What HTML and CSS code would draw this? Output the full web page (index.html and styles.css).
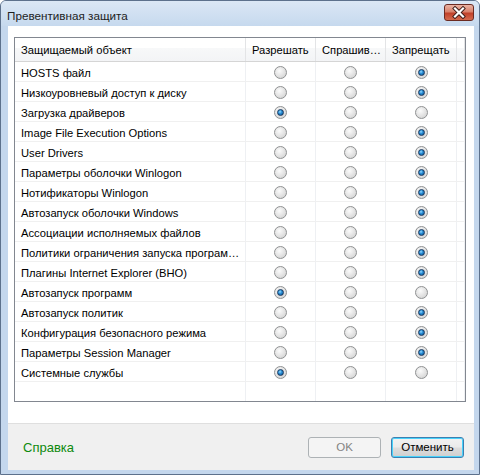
FILE: index.html
```html
<!DOCTYPE html>
<html>
<head>
<meta charset="utf-8">
<link rel="stylesheet" href="styles.css">
</head>
<body>
<div class="window">
  <div class="titlebar">
    <span class="title">Превентивная защита</span>
    <div class="close">
      <svg width="30" height="17" viewBox="0 0 30 17">
        <path d="M11 4.5 L19 12.5 M19 4.5 L11 12.5" stroke="#3a1a16" stroke-width="4" stroke-linecap="square" fill="none"/>
        <path d="M11 4.5 L19 12.5 M19 4.5 L11 12.5" stroke="#ffffff" stroke-width="2.2" stroke-linecap="square" fill="none"/>
      </svg>
    </div>
  </div>
  <div class="frame">
    <div class="client">
      <div class="content">
        <div class="list">
          <div class="row head">
            <div class="cell name">Защищаемый объект</div>
            <div class="cell opt">Разрешать</div>
            <div class="cell opt">Спрашив…</div>
            <div class="cell opt">Запрещать</div>
            <div class="cell fill"></div>
          </div>
          <div class="row"><div class="cell name">HOSTS файл</div><div class="cell c"><span class="radio"></span></div><div class="cell c"><span class="radio"></span></div><div class="cell c"><span class="radio on"></span></div><div class="cell fill"></div></div>
          <div class="row"><div class="cell name">Низкоуровневый доступ к диску</div><div class="cell c"><span class="radio"></span></div><div class="cell c"><span class="radio"></span></div><div class="cell c"><span class="radio on"></span></div><div class="cell fill"></div></div>
          <div class="row"><div class="cell name">Загрузка драйверов</div><div class="cell c"><span class="radio on"></span></div><div class="cell c"><span class="radio"></span></div><div class="cell c"><span class="radio"></span></div><div class="cell fill"></div></div>
          <div class="row"><div class="cell name">Image File Execution Options</div><div class="cell c"><span class="radio"></span></div><div class="cell c"><span class="radio"></span></div><div class="cell c"><span class="radio on"></span></div><div class="cell fill"></div></div>
          <div class="row"><div class="cell name">User Drivers</div><div class="cell c"><span class="radio"></span></div><div class="cell c"><span class="radio"></span></div><div class="cell c"><span class="radio on"></span></div><div class="cell fill"></div></div>
          <div class="row"><div class="cell name">Параметры оболочки Winlogon</div><div class="cell c"><span class="radio"></span></div><div class="cell c"><span class="radio"></span></div><div class="cell c"><span class="radio on"></span></div><div class="cell fill"></div></div>
          <div class="row"><div class="cell name">Нотификаторы Winlogon</div><div class="cell c"><span class="radio"></span></div><div class="cell c"><span class="radio"></span></div><div class="cell c"><span class="radio on"></span></div><div class="cell fill"></div></div>
          <div class="row"><div class="cell name">Автозапуск оболочки Windows</div><div class="cell c"><span class="radio"></span></div><div class="cell c"><span class="radio"></span></div><div class="cell c"><span class="radio on"></span></div><div class="cell fill"></div></div>
          <div class="row"><div class="cell name">Ассоциации исполняемых файлов</div><div class="cell c"><span class="radio"></span></div><div class="cell c"><span class="radio"></span></div><div class="cell c"><span class="radio on"></span></div><div class="cell fill"></div></div>
          <div class="row"><div class="cell name">Политики ограничения запуска програм…</div><div class="cell c"><span class="radio"></span></div><div class="cell c"><span class="radio"></span></div><div class="cell c"><span class="radio on"></span></div><div class="cell fill"></div></div>
          <div class="row"><div class="cell name">Плагины Internet Explorer (BHO)</div><div class="cell c"><span class="radio"></span></div><div class="cell c"><span class="radio"></span></div><div class="cell c"><span class="radio on"></span></div><div class="cell fill"></div></div>
          <div class="row"><div class="cell name">Автозапуск программ</div><div class="cell c"><span class="radio on"></span></div><div class="cell c"><span class="radio"></span></div><div class="cell c"><span class="radio"></span></div><div class="cell fill"></div></div>
          <div class="row"><div class="cell name">Автозапуск политик</div><div class="cell c"><span class="radio"></span></div><div class="cell c"><span class="radio"></span></div><div class="cell c"><span class="radio on"></span></div><div class="cell fill"></div></div>
          <div class="row"><div class="cell name">Конфигурация безопасного режима</div><div class="cell c"><span class="radio"></span></div><div class="cell c"><span class="radio"></span></div><div class="cell c"><span class="radio on"></span></div><div class="cell fill"></div></div>
          <div class="row"><div class="cell name">Параметры Session Manager</div><div class="cell c"><span class="radio"></span></div><div class="cell c"><span class="radio"></span></div><div class="cell c"><span class="radio on"></span></div><div class="cell fill"></div></div>
          <div class="row"><div class="cell name">Системные службы</div><div class="cell c"><span class="radio on"></span></div><div class="cell c"><span class="radio"></span></div><div class="cell c"><span class="radio"></span></div><div class="cell fill"></div></div>
          <div class="row empty"><div class="cell name"></div><div class="cell c"></div><div class="cell c"></div><div class="cell c"></div><div class="cell fill"></div></div>
        </div>
      </div>
      <div class="footer">
        <span class="help">Справка</span>
        <span class="spacer"></span>
        <div class="btn disabled">OK</div>
        <div class="btn default">Отменить</div>
      </div>
    </div>
  </div>
</div>
</body>
</html>
```
FILE: styles.css
```css
html, body {
  margin: 0;
  padding: 0;
}
body {
  width: 480px;
  height: 475px;
  overflow: hidden;
  background: #ffffff;
  font-family: "Liberation Sans", Arial, sans-serif;
  font-size: 11.2px;
  color: #000;
}
.window {
  width: 480px;
  height: 475px;
  box-sizing: border-box;
  border: 1px solid #5d718c;
  border-radius: 6px 6px 0 0;
  background: #c4d7ed;
  display: flex;
  flex-direction: column;
  overflow: hidden;
}
.titlebar {
  height: 25px;
  flex: none;
  display: flex;
  align-items: flex-start;
  background: linear-gradient(#dbe7f5, #c6d9ee);
}
.title {
  padding: 7px 0 0 6px;
  line-height: 15px;
  font-size: 11.7px;
  color: #1e1e1e;
}
.close {
  margin-left: auto;
  margin-top: 3px;
  margin-right: 5px;
  width: 30px;
  height: 17px;
  box-sizing: border-box;
  border: 1px solid #6b2b22;
  border-radius: 3px;
  background: linear-gradient(#eab3a4 0%, #d9826c 45%, #c1412a 55%, #d46b4f 100%);
  display: flex;
  align-items: center;
  justify-content: center;
}
.close svg {
  display: block;
  margin: -1px;
}
.frame {
  flex: 1;
  display: flex;
  padding: 0 5px 4px 7px;
  background: #c4d7ed;
}
.client {
  flex: 1;
  display: flex;
  flex-direction: column;
  background: #ffffff;
}
.content {
  height: 397px;
  box-sizing: border-box;
  padding: 11px 8px 0 6px;
}
.list {
  height: 365px;
  box-sizing: border-box;
  border: 1px solid #828790;
  display: flex;
  flex-direction: column;
}
.row {
  display: flex;
  height: 20px;
  box-sizing: border-box;
  border-bottom: 1px solid #f0f0f0;
  flex: none;
}
.row.head {
  height: 24px;
  border-bottom: 1px solid #d5d5d5;
  background: linear-gradient(#ffffff 0%, #ffffff 45%, #f7f8f9 45%, #f3f4f6 100%);
}
.row.empty {
  flex: 1;
  border-bottom: none;
}
.cell {
  box-sizing: border-box;
  border-right: 1px solid #eef0f3;
  display: flex;
  align-items: center;
  white-space: nowrap;
  overflow: hidden;
}
.head .cell {
  border-right: 1px solid #e3e4e6;
}
.cell.name {
  width: 231px;
  padding: 2px 0 0 6px;
}
.head .cell.name,
.head .cell.opt {
  padding: 0 0 0 6px;
}
.cell.opt,
.cell.c {
  width: 70px;
}
.cell.opt:nth-child(4),
.cell.c:nth-child(4) {
  width: 71px;
}
.cell.c {
  justify-content: center;
  padding-top: 2px;
}
.cell.fill {
  flex: 1;
}
.radio {
  width: 13px;
  height: 13px;
  box-sizing: border-box;
  border-radius: 50%;
  border: 1px solid #8f9192;
  background: radial-gradient(circle at 40% 35%, #fbfbfb 0%, #e6e6e6 45%, #cdcdcd 100%);
  display: flex;
  align-items: center;
  justify-content: center;
}
.radio.on::after {
  content: "";
  width: 7px;
  height: 7px;
  box-sizing: border-box;
  border-radius: 50%;
  border: 1px solid #17375e;
  background: radial-gradient(circle at 40% 35%, #9adcff 0%, #2a8fd6 40%, #0c4b86 100%);
}
.footer {
  height: 47px;
  box-sizing: border-box;
  border-top: 1px solid #dfdfdf;
  background: #f0f0f0;
  display: flex;
  align-items: center;
  padding: 0 10px 0 15px;
  gap: 10px;
}
.help {
  color: #0d8a0d;
  font-size: 13px;
}
.spacer {
  flex: 1;
}
.btn {
  width: 73px;
  height: 21px;
  box-sizing: border-box;
  border-radius: 3px;
  display: flex;
  align-items: center;
  justify-content: center;
  font-size: 11.5px;
}
.btn.disabled {
  border: 1px solid #adb2b5;
  background: #f4f4f4;
  color: #838383;
}
.btn.default {
  border: 1px solid #3c7fb1;
  box-shadow: inset 0 0 0 1px #48d2fb;
  background: linear-gradient(#f2f2f2 0%, #ebebeb 48%, #dddddd 52%, #cfcfcf 100%);
  color: #000;
}
```
